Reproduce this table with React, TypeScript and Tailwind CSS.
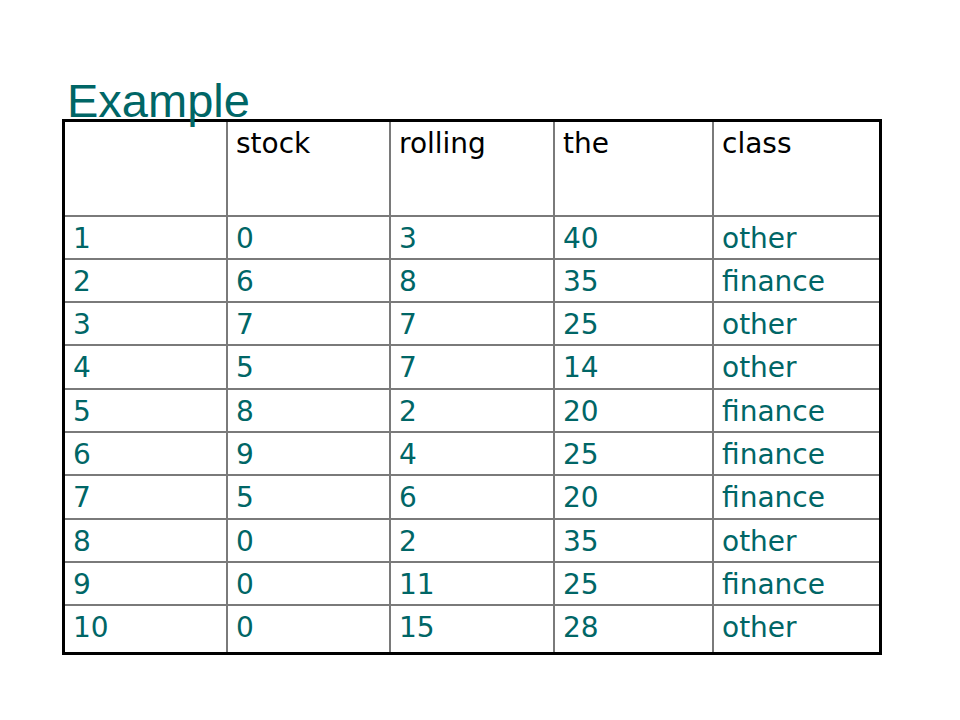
import React from "react";

const header = ["", "stock", "rolling", "the", "class"];
const rows: string[][] = [
  ["1", "0", "3", "40", "other"],
  ["2", "6", "8", "35", "finance"],
  ["3", "7", "7", "25", "other"],
  ["4", "5", "7", "14", "other"],
  ["5", "8", "2", "20", "finance"],
  ["6", "9", "4", "25", "finance"],
  ["7", "5", "6", "20", "finance"],
  ["8", "0", "2", "35", "other"],
  ["9", "0", "11", "25", "finance"],
  ["10", "0", "15", "28", "other"],
];

export default function App() {
  return (
    <div className="w-[960px] h-[720px] bg-white pt-[77px] pl-[62px] overflow-hidden">
      <h1
        className="relative z-10 text-[47px] leading-[47px] h-[47px] mb-[-5px] pl-[5px] text-[#006666]"
        style={{ fontFamily: '"Liberation Sans", Arial, sans-serif' }}
      >
        Example
      </h1>
      <div
        className="w-[820px] border-[3px] border-black bg-[#7a7a7a] grid gap-[2px] grid-cols-[161px_161px_162px_157px_165px] grid-rows-[93px_41px_41px_41px_42px_41px_41px_42px_41px_41px_46px]"
        style={{ fontFamily: '"DejaVu Sans", Verdana, sans-serif' }}
      >
        {header.map((h, i) => (
          <div key={"h" + i} className="bg-white pl-2 pt-[6px] text-[28px] leading-[32px] text-black">
            {h}
          </div>
        ))}
        {rows.map((r, ri) =>
          r.map((c, ci) => (
            <div key={ri + "-" + ci} className="bg-white pl-2 pt-[6px] text-[28px] leading-[32px] text-[#006666]">
              {c}
            </div>
          ))
        )}
      </div>
    </div>
  );
}
